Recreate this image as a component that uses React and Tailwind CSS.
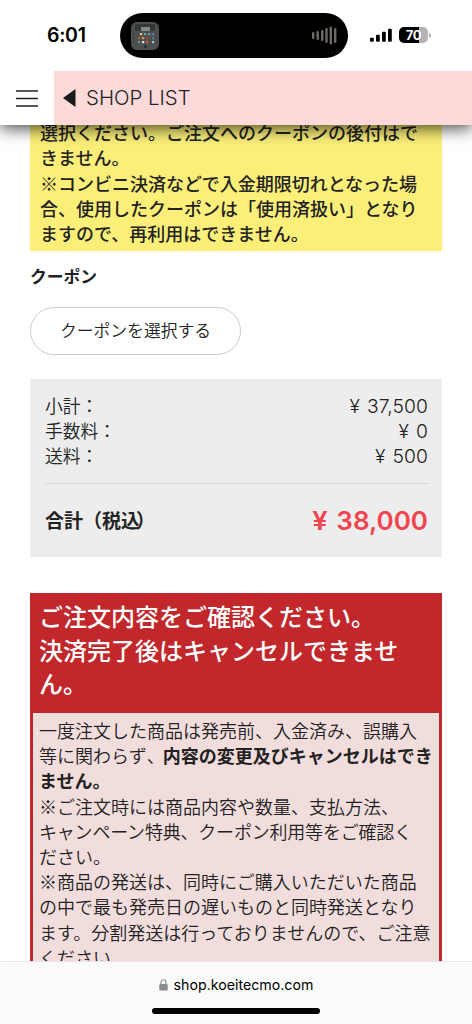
import React from "react";

const signal = [
  [0, 10, 4],
  [6, 7, 7],
  [12, 4, 10],
  [18, 1, 13],
];
const wave = [
  [0, 6, 7],
  [4.5, 5, 9],
  [9, 4, 11],
  [13.3, 2, 15],
  [17.6, 0.5, 18],
  [22, 2, 15],
];
const appDots = [
  ["#d8c9a0", 9, 11], ["#5fa8b8", 13, 11], ["#7b8f9b", 17, 11], ["#5a7fa8", 21, 11],
  ["#b9503c", 7, 15], ["#d39b3c", 11, 15], ["#c9342c", 15, 15], ["#4478b0", 21, 15],
  ["#47a79a", 7, 19], ["#e3e3df", 11, 19], ["#c5604b", 15, 19], ["#a8b8c0", 21, 19],
];

function StatusBar() {
  return (
    <div className="flex h-[71px] items-start bg-white">
      <div className="mt-[22px] w-[120px] pl-[47px] text-[19.5px] leading-[27px] font-semibold tracking-[-0.3px] text-black">
        6:01
      </div>
      <div className="mt-[13px] flex h-[45px] w-[228px] items-center justify-between rounded-full bg-black pr-[11px] pl-[11px]">
        <svg width="28" height="28" viewBox="0 0 28 28">
          <rect width="28" height="28" rx="6" fill="#4b4f4d" />
          <path d="M4 2h20v7H4z" fill="#343836" />
          <path d="M10 5h9v4h-9z" fill="#858a88" />
          <path d="M2 12h1M2 16h1M2 20h1M25 12h1M25 16h1M25 20h1" stroke="#252827" />
          {appDots.map(([c, x, y]) => (
            <rect key={`${x}-${y}`} x={x} y={y} width="2.2" height="2.2" fill={c} />
          ))}
          <path d="M13 23h3v3h-3z" fill="#303432" />
        </svg>
        <svg width="25" height="19" viewBox="0 0 25 19">
          {wave.map(([x, y, h]) => (
            <rect key={x} x={x} y={y} width="2.4" height={h} rx="1.2" fill="#6d6b63" />
          ))}
        </svg>
      </div>
      <svg className="mt-[27px] ml-[22px]" width="22" height="16" viewBox="0 0 22 16">
        {signal.map(([x, y, h]) => (
          <rect key={x} x={x} y={y + 0.8} width="3.8" height={h} rx="1" fill="#000" />
        ))}
      </svg>
      <div className="mt-[27px] ml-[7px] flex items-center gap-px">
        <div className="flex h-4 w-[29px] items-center justify-center rounded-[5px] bg-[linear-gradient(90deg,#000_70%,#b3b3b3_70%)] text-[13px] leading-4 font-bold tracking-[-0.3px] text-white">
          70
        </div>
        <div className="h-[5px] w-[1.5px] rounded-r-full bg-[#b3b3b3]" />
      </div>
    </div>
  );
}

function NavBar() {
  return (
    <div className="flex h-[54px] bg-white">
      <div className="flex w-[54px] items-center pl-4">
        <svg width="22" height="17" viewBox="0 0 22 17" stroke="#222" strokeWidth="1.3">
          <path d="M0 1h22M0 8.5h22M0 16h22" />
        </svg>
      </div>
      <div className="flex flex-1 items-center bg-[#fddada] pl-[9px]">
        <svg width="13" height="18" viewBox="0 0 13 18">
          <path d="M0 9 12.5 0v18z" fill="#1a1a1a" />
        </svg>
        <span className="ml-[10px] text-[20.4px] leading-[54px] font-light text-[#222]">SHOP LIST</span>
      </div>
    </div>
  );
}

function Fee({ label, value }) {
  return (
    <div className="flex justify-between leading-[25.2px]">
      <span className="text-[17.8px] font-[350]">{label}</span>
      <span className="relative top-px flex gap-[7px] font-['Inter','Noto_Sans_CJK_JP',sans-serif] text-[19.3px] font-light tracking-[0.1px]">
        <span>¥</span>
        <span>{value}</span>
      </span>
    </div>
  );
}

export default function App() {
  return (
    <div className="flex h-[1024px] w-[472px] flex-col overflow-hidden bg-white text-[#222]">
      <header className="relative z-10 shrink-0 bg-white font-['Inter',sans-serif] shadow-[0_3px_16px_rgba(0,0,0,0.75)]">
        <StatusBar />
        <NavBar />
      </header>

      <main className="min-h-0 flex-1 overflow-hidden pr-[30px] pl-[30px] font-['Noto_Sans_CJK_JP',sans-serif] whitespace-nowrap">
        <div className="-mt-[5px] h-[131px] bg-[#fbef79] pl-[10px] text-[18px] leading-[25.3px] font-medium">
          選択ください。ご注文へのクーポンの後付はで<br />
          きません。<br />
          ※コンビニ決済などで入金期限切れとなった場<br />
          合、使用したクーポンは「使用済扱い」となり<br />
          ますので、再利用はできません。
        </div>

        <h2 className="mt-[13px] text-[16.8px] leading-6 font-bold">クーポン</h2>
        <button className="mt-[19px] flex h-12 w-[211px] items-center justify-center rounded-full border border-[#ccc] bg-white text-[16.8px] font-[350]">
          クーポンを選択する
        </button>

        <section className="mt-6 h-[178px] bg-[#ededed] pt-[14px] pr-[14px] pl-[15px]">
          <Fee label="小計：" value="37,500" />
          <Fee label="手数料：" value="0" />
          <Fee label="送料：" value="500" />
          <div className="mt-[14px] flex h-[74px] items-center justify-between border-t border-[#d5d5d5]">
            <span className="text-[19px] font-bold">合計（税<span className="tracking-[-4px]">込</span>）</span>
            <span className="flex gap-[9px] font-['Inter',sans-serif] text-[26px] font-semibold text-[#f0444f]">
              <span className="origin-right scale-x-105">¥</span>
              <span>38,000</span>
            </span>
          </div>
        </section>

        <section className="mt-9 border-x-[3px] border-[#c1272b] bg-[#f2dddd]">
          <h3 className="-mx-[3px] h-[120px] bg-[#c1272b] pt-[6px] pl-[9px] text-[24px] leading-[33.6px] font-medium text-white">
            ご注文内容をご確認ください。<br />
            決済完了後はキャンセルできませ<br />
            ん。
          </h3>
          <p className="pt-[5px] pb-4 pl-[6px] text-[18px] leading-[25.2px] font-[350]">
            一度注文した商品は発売前、入金済み、誤購入<br />
            等に関わらず<span className="tracking-[-2px]">、</span><strong className="font-bold">内容の変更及びキャンセルはでき<br />
            ません。</strong><br />
            ※ご注文時には商品内容や数量、支払方法、<br />
            <span className="tracking-[-0.2px]">キャンペーン特典、クーポン利用等をご確認く</span><br />
            ださい。<br />
            ※商品の発送は、同時にご購入いただいた商品<br />
            の中で最も発売日の遅いものと同時発送となり<br />
            ます。分割発送は行っておりませんので、ご注意<br />
            ください。
          </p>
        </section>
      </main>

      <footer className="relative z-10 flex h-[63px] shrink-0 flex-col items-center border-t border-[#e8e6e6] bg-[#fcfbfb] font-['Inter',sans-serif]">
        <div className="mt-[11px] flex h-6 items-center gap-[6px] text-[14.2px] text-black">
          <svg width="9" height="12" viewBox="0 0 9 12">
            <rect x="0.3" y="5" width="8.4" height="6.6" rx="1.2" fill="#8a8a8e" />
            <path d="M2 5.5V3.2a2.5 2.5 0 0 1 5 0v2.3" fill="none" stroke="#8a8a8e" strokeWidth="1.1" />
          </svg>
          <span>shop.koeitecmo.com</span>
        </div>
        <div className="mt-[11px] h-[6px] w-[168px] rounded-full bg-black" />
      </footer>
    </div>
  );
}
